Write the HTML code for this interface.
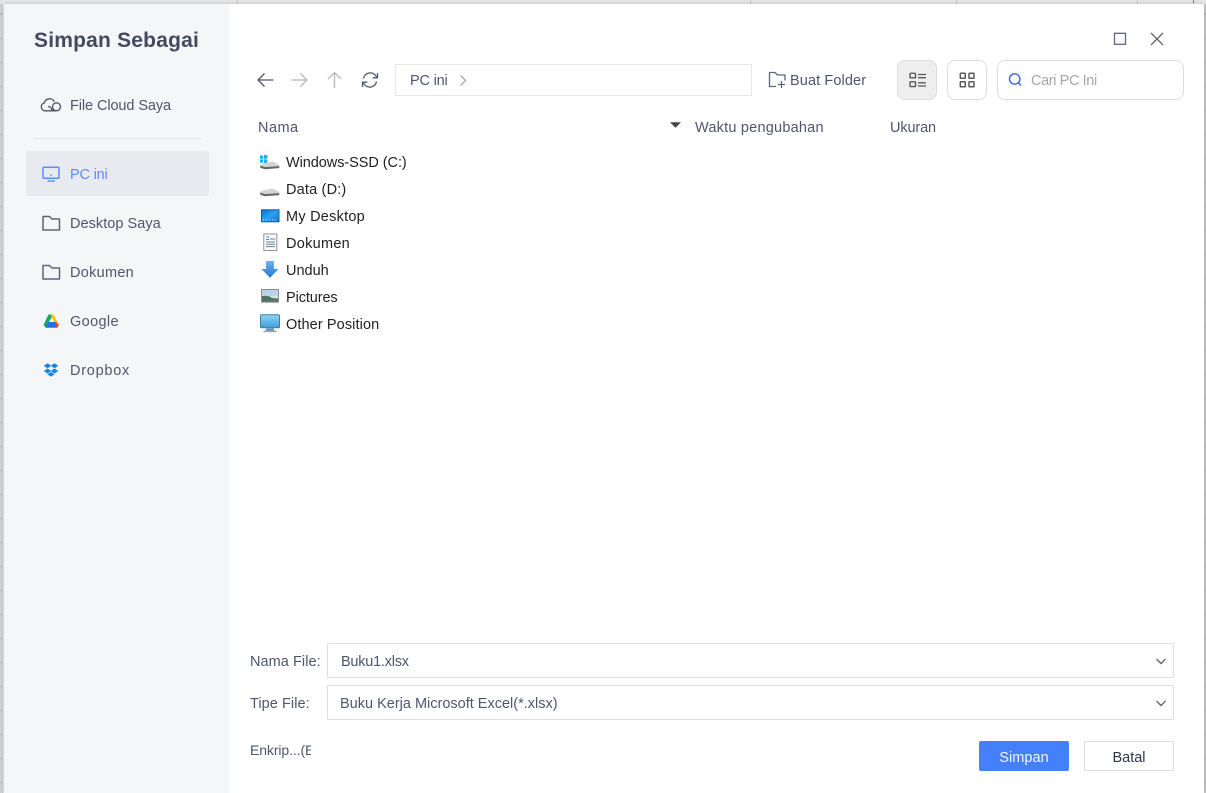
<!DOCTYPE html>
<html><head><meta charset="utf-8">
<style>
html,body{margin:0;padding:0}
body{width:1206px;height:793px;position:relative;overflow:hidden;background:#fff;font-family:"Liberation Sans",sans-serif;color:#4a5268}
.bgl{position:absolute;background:#d6d6d6}
.t{position:absolute;white-space:nowrap;font-size:14.5px;line-height:20px;color:#4e566c}
.k{color:#222}
.s{position:absolute;left:0;top:0}
.box{position:absolute;box-sizing:border-box;background:#fff}
</style></head>
<body>
<!-- spreadsheet behind -->
<div class="bgl" style="left:0;top:0;width:3px;height:793px;background:repeating-linear-gradient(to bottom,#bcbcbc 0,#bcbcbc 1px,#cfcfcf 1px,#cfcfcf 24px) 0 14px"></div>
<div class="bgl" style="left:3px;top:0;width:1px;height:793px;background:#e6e6e6"></div>
<div class="bgl" style="left:1204px;top:0;width:2px;height:793px;background:repeating-linear-gradient(to bottom,#b6b6b6 0,#b6b6b6 1px,#c8c8c8 1px,#c8c8c8 24px) 0 14px"></div>
<div class="bgl" style="left:0;top:0;width:1206px;height:4px;background:#e4e4e4"></div>
<div class="bgl" style="left:237px;top:0;width:1px;height:4px;background:#c4c4c4"></div>
<div class="bgl" style="left:750px;top:0;width:1px;height:4px;background:#c4c4c4"></div>
<div class="bgl" style="left:956px;top:0;width:1px;height:4px;background:#c4c4c4"></div>
<div class="bgl" style="left:1137px;top:0;width:1px;height:4px;background:#c4c4c4"></div>
<div class="bgl" style="left:1193px;top:0;width:1px;height:3px;background:#777"></div>

<!-- dialog -->
<div class="box" style="left:4px;top:4px;width:1200px;height:789px;border-radius:4px 4px 0 0;background:#fff;overflow:hidden;box-shadow:0 0 3px rgba(0,0,0,.2)">
  <div style="position:absolute;left:0;top:0;width:226px;height:789px;background:#f5f6f8"></div>
</div>

<!-- sidebar -->
<div class="t" style="left:34px;top:27px;font-size:21px;line-height:28px;font-weight:bold;color:#434a60;letter-spacing:.2px">Simpan Sebagai</div>
<div class="box" style="left:33px;top:138px;width:168px;height:1px;background:#e3e4e8"></div>
<div class="box" style="left:26px;top:151px;width:183px;height:45px;background:#e8eaef;border-radius:2px"></div>

<svg class="s" width="230" height="400" fill="none">
  <!-- cloud -->
  <circle cx="56.500" cy="106.800" r="4" stroke="#4d5468" stroke-width="1.300"/>
  <path d="M45 110.800h11.500M45 110.800a4 4 0 0 1-.6-7.900 5.300 5.300 0 0 1 9.900-1.200M48 106.500a3.600 3.600 0 0 1 3.500 2.500l1.500 1.500" stroke="#4d5468" stroke-width="1.300"/>
  <!-- PC -->
  <rect x="43" y="167.200" width="16" height="11" rx="1" stroke="#5b8cff" stroke-width="1.500"/>
  <path d="M47.500 181h7.500" stroke="#5b8cff" stroke-width="1.400"/>
  <rect x="50.300" y="174.500" width="1.500" height="1.500" fill="#5b8cff"/>
  <!-- folders -->
  <path d="M43 216.500h6.500l2.500 2.500h7.500V230H43z" stroke="#5e6578" stroke-width="1.500" stroke-linejoin="round"/>
  <path d="M43 265.500h6.500l2.500 2.500h7.500V279H43z" stroke="#5e6578" stroke-width="1.500" stroke-linejoin="round"/>
  <!-- google drive -->
  <path d="M48.500 314.500h3l1 1.800-6.500 11.400-2.500-2.700z" fill="#1da462"/>
  <path d="M51.500 314.500h2l5.300 10-2.300 1.500-5.500-9.800z" fill="#ffc107"/>
  <path d="M48 322h7l3.800 3-1.500 2.800H45.500z" fill="#1a73e8"/>
  <path d="M55 322h1l2.800 3-1.500 2.800-1.800-1z" fill="#ea4335"/>
  <path d="M49 322l2-3.500 2 3.500z" fill="#fff"/>
  <!-- dropbox -->
  <path d="M47.500 363.500l3.500 2.300-3.500 2.300-3.500-2.300z M54.500 363.500l3.500 2.300-3.500 2.300-3.500-2.300z M47.500 368.700l3.500 2.300-3.500 2.300-3.500-2.300z M54.500 368.700l3.500 2.300-3.500 2.300-3.500-2.300z M47.700 374.300l3.300-2 3.300 2-3.300 2.100z" fill="#1584e8" stroke="#1584e8" stroke-width=".4"/>
</svg>
<div class="t" style="left:70px;top:96px;letter-spacing:-.09px">File Cloud Saya</div>
<div class="t" style="left:70px;top:165px;color:#5b8cff;letter-spacing:-.2px">PC ini</div>
<div class="t" style="left:70px;top:214px;letter-spacing:.04px">Desktop Saya</div>
<div class="t" style="left:70px;top:263px;letter-spacing:.28px">Dokumen</div>
<div class="t" style="left:70px;top:312px;letter-spacing:.36px">Google</div>
<div class="t" style="left:70px;top:361px;letter-spacing:.74px">Dropbox</div>

<div class="box" style="left:395px;top:64px;width:357px;height:32px;border:1px solid #e6e6e6"></div>
<!-- window controls + toolbar -->
<svg class="s" width="1206" height="140" fill="none">
  <rect x="1114.500" y="33.300" width="11" height="11" stroke="#5d6782" stroke-width="1.300"/>
  <path d="M1151 33l12 12M1163 33l-12 12" stroke="#60667a" stroke-width="1.300"/>
  <!-- back -->
  <path d="M258 80h15.500M264.500 73.500L258 80l6.500 6.500" stroke="#50576a" stroke-width="1.300"/>
  <!-- forward -->
  <path d="M291.500 80H307M300.500 73.500L307 80l-6.500 6.500" stroke="#b3b7c2" stroke-width="1.300"/>
  <!-- up -->
  <path d="M334.500 88V72.500M328 79l6.500-6.500L341 79" stroke="#b3b7c2" stroke-width="1.300"/>
  <!-- refresh -->
  <path d="M363.500 78.500a6.800 6.800 0 0 1 12-3l1.700 2M376.500 81.500a6.800 6.800 0 0 1-12 3l-1.700-2" stroke="#50576a" stroke-width="1.300"/>
  <path d="M377.500 73v4.800h-4.800M362.500 87v-4.800h4.800" stroke="#50576a" stroke-width="1.300"/>
  <!-- breadcrumb chevron -->
  <path d="M460.500 75.500l5 5-5 5" stroke="#a4a8b3" stroke-width="1.300"/>
  <!-- new folder -->
  <path d="M776 86.500h-6.500v-14h5.500l2.500 2.500h7.500v5.500" stroke="#5e6578" stroke-width="1.300" stroke-linejoin="round"/>
  <path d="M778 84.500h7M781.500 81v7" stroke="#5e6578" stroke-width="1.300"/>
  <!-- sort -->
  <path d="M670 122.300h11l-5.500 5.500z" fill="#444"/>
</svg>
<div class="t" style="left:410px;top:71px;letter-spacing:-.2px">PC ini</div>
<div class="t" style="left:790px;top:71px;letter-spacing:.11px">Buat Folder</div>

<!-- view toggles -->
<div class="box" style="left:897px;top:60px;width:40px;height:40px;border:1px solid #dcdcdc;border-radius:8px;background:#eeeeee"></div>
<div class="box" style="left:947px;top:60px;width:40px;height:40px;border:1px solid #dcdcdc;border-radius:8px"></div>
<div class="box" style="left:997px;top:60px;width:187px;height:40px;border:1px solid #dcdcdc;border-radius:8px"></div>
<svg class="s" width="1206" height="140" fill="none">
  <rect x="910" y="73.300" width="5.500" height="4.500" rx=".6" stroke="#5a5a5a" stroke-width="1.400"/>
  <rect x="910" y="81.800" width="5.500" height="4.800" rx=".6" stroke="#5a5a5a" stroke-width="1.400"/>
  <path d="M918 74.500h8M918 77.700h8M918 82.800h8M918 86h8" stroke="#5a5a5a" stroke-width="1.300"/>
  <rect x="960.300" y="73.300" width="5" height="5" rx=".6" stroke="#5a5a5a" stroke-width="1.500"/>
  <rect x="969" y="73.300" width="5" height="5" rx=".6" stroke="#5a5a5a" stroke-width="1.500"/>
  <rect x="960.300" y="81.800" width="5" height="5" rx=".6" stroke="#5a5a5a" stroke-width="1.500"/>
  <rect x="969" y="81.800" width="5" height="5" rx=".6" stroke="#5a5a5a" stroke-width="1.500"/>
  <circle cx="1014.700" cy="79" r="5.200" stroke="#2f68ea" stroke-width="1.400"/>
  <path d="M1018.400 82.700l2.600 3" stroke="#2f68ea" stroke-width="1.400"/>
</svg>
<div class="t" style="left:1031px;top:71px;color:#a6a6a6;letter-spacing:-.39px">Cari PC Ini</div>

<!-- headers -->
<div class="t" style="left:258px;top:118px;letter-spacing:.47px">Nama</div>
<div class="t" style="left:695px;top:118px;letter-spacing:.22px">Waktu pengubahan</div>
<div class="t" style="left:890px;top:118px;letter-spacing:-.13px">Ukuran</div>

<!-- file list icons -->
<svg class="s" width="300" height="340" fill="none">
  <defs>
    <linearGradient id="a" x1="0" y1="0" x2="1" y2="1"><stop offset="0" stop-color="#0f6fd0"/><stop offset=".5" stop-color="#2ba0f0"/><stop offset="1" stop-color="#1279d8"/></linearGradient>
    <linearGradient id="b" x1="0" y1="0" x2="0" y2="1"><stop offset="0" stop-color="#6fb1ee"/><stop offset="1" stop-color="#2479d0"/></linearGradient>
    <linearGradient id="c" x1="0" y1="0" x2="0" y2="1"><stop offset="0" stop-color="#8fd4f5"/><stop offset="1" stop-color="#3a9fdc"/></linearGradient>
  </defs>
  <!-- windows ssd -->
  <path d="M260 155.500h3.200v3.200H260zM264 155h3.400v3.700H264zM260 159.400h3.200v3.200H260zM264 159.400h3.400v3.700H264z" fill="#10b4f0"/>
  <path d="M264 163l9-1.500 6.300 3.500v1.500l-14.800.8-4.300-1.500v-1z" fill="#d4d4d4"/>
  <path d="M260.200 165.600l4.800 1.500 14.300-1v2l-14.300 1.200-4.800-1.500z" fill="#666"/>
  <!-- data -->
  <path d="M264 190l9-1.500 6.300 3.500v1.500l-14.800.8-4.300-1.500v-1z" fill="#d4d4d4"/>
  <path d="M260.200 192.600l4.800 1.500 14.300-1v2l-14.300 1.200-4.800-1.500z" fill="#666"/>
  <!-- desktop -->
  <rect x="261.500" y="209.800" width="17.500" height="12" fill="url(#a)" stroke="#0c5fa8"/>
  <path d="M263 220h1M266 220h1M269 220h1M272 220h1M275 220h1" stroke="#cfeaff"/>
  <!-- doc -->
  <rect x="263.800" y="234" width="13" height="16.500" fill="#fdfdfd" stroke="#8a8f96"/>
  <path d="M266 237h3M266 239.500h3" stroke="#4a8bc0"/>
  <path d="M270 239h5M266 242h9M266 244.300h9M266 246.600h9" stroke="#5f7e96"/>
  <!-- download -->
  <path d="M266 261h8v8h4.500l-8.500 8.700-8.500-8.700h4.500z" fill="url(#b)"/>
  <!-- pictures -->
  <rect x="261.500" y="289.500" width="17" height="12.700" fill="#dbe4ea" stroke="#8b8f94"/>
  <path d="M262 296l6-.5 4 2.500 6 .5v3.200h-16z" fill="#4f7466"/>
  <path d="M262 290h16v5.500l-8 1-8-1.500z" fill="#b7d4e8"/>
  <!-- monitor -->
  <rect x="260.500" y="314.800" width="19" height="13" rx="1.200" fill="url(#c)" stroke="#36829f"/>
  <rect x="266" y="328.500" width="8" height="2" fill="#6d8ea1"/>
  <rect x="263.500" y="330.500" width="13" height="1.700" fill="#93a7b3"/>
</svg>
<div class="t k" style="left:286px;top:153px;letter-spacing:-.06px">Windows-SSD (C:)</div>
<div class="t k" style="left:286px;top:180px;letter-spacing:.18px">Data (D:)</div>
<div class="t k" style="left:286px;top:207px;letter-spacing:.24px">My Desktop</div>
<div class="t k" style="left:286px;top:234px;letter-spacing:.28px">Dokumen</div>
<div class="t k" style="left:286px;top:261px">Unduh</div>
<div class="t k" style="left:286px;top:288px;letter-spacing:-.1px">Pictures</div>
<div class="t k" style="left:286px;top:315px;letter-spacing:.1px">Other Position</div>

<!-- bottom form -->
<div class="t" style="left:250px;top:652px;letter-spacing:.06px">Nama File:</div>
<div class="t" style="left:250px;top:694px;letter-spacing:.06px">Tipe File:</div>
<div class="box" style="left:327px;top:643px;width:847px;height:35px;border:1px solid #dedede;border-radius:2px"></div>
<div class="box" style="left:327px;top:685px;width:847px;height:35px;border:1px solid #dedede;border-radius:2px"></div>
<div class="t" style="left:341px;top:652px;letter-spacing:-.24px">Buku1.xlsx</div>
<div class="t" style="left:340px;top:694px">Buku Kerja Microsoft Excel(*.xlsx)</div>
<svg class="s" width="1206" height="793" fill="none" style="pointer-events:none">
  <path d="M1156.500 659l4.500 4.500 4.500-4.500M1156.500 701l4.500 4.500 4.500-4.500" stroke="#5d6478" stroke-width="1.400"/>
</svg>
<div class="t" style="left:250px;top:740px;width:61px;overflow:hidden;font-size:14px;letter-spacing:-.1px">Enkrip...(E)</div>
<div class="box" style="left:979px;top:741px;width:90px;height:30px;background:#4580fb;border-radius:2px"></div>
<div class="t" style="left:979px;top:748px;width:90px;text-align:center;color:#f2f5ff;letter-spacing:.06px">Simpan</div>
<div class="box" style="left:1084px;top:741px;width:90px;height:30px;border:1px solid #dcdcdc;border-radius:2px"></div>
<div class="t" style="left:1084px;top:748px;width:90px;text-align:center;color:#2e3648">Batal</div>
</body></html>
